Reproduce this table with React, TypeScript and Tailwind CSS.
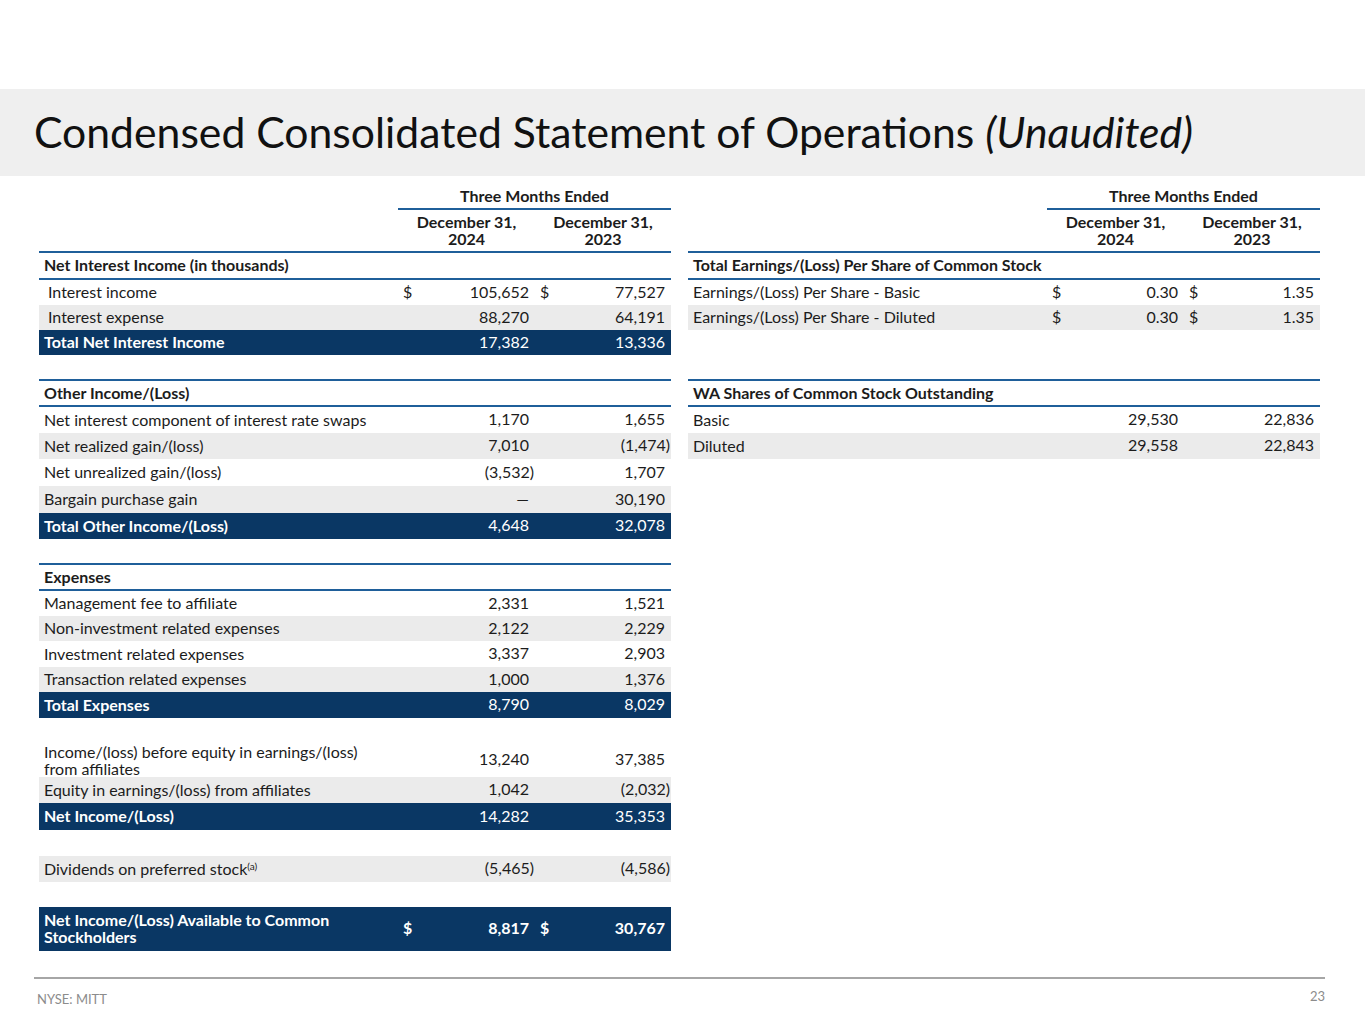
import React from "react";

const NAVY = "bg-[#0a3764]";
type Row = {
  label: React.ReactNode;
  a: string;
  b: string;
  dollar?: boolean;
  kind?: "w" | "g" | "t";
  h?: string;
  bold?: boolean;
};

function Num({ v, bold }: { v: string; bold?: boolean }) {
  const neg = v.endsWith(")");
  return (
    <span className={`${neg ? "pr-[1px]" : "pr-[6px]"} ${bold ? "font-bold" : ""}`}>{v}</span>
  );
}

function DataRow({ r }: { r: Row }) {
  const bg = r.kind === "g" ? "bg-[#ebebeb]" : r.kind === "t" ? NAVY : "bg-white";
  const color = r.kind === "t" ? "text-white" : "text-[#1c1c1c]";
  const isBoldLabel = r.kind === "t";
  return (
    <div className={`flex items-center pb-[2px] ${bg} ${color} ${r.h ?? "h-[25px]"}`}>
      <div className={`w-[359px] pl-[5px] leading-[17px] ${isBoldLabel ? "font-bold" : ""}`}>{r.label}</div>
      <div className="flex w-[137px] items-center justify-between">
        <span className={`pl-[5px] ${r.bold ? "font-bold" : ""}`}>{r.dollar ? "$" : ""}</span>
        <Num v={r.a} bold={r.bold} />
      </div>
      <div className="flex w-[136px] items-center justify-between">
        <span className={`pl-[5px] ${r.bold ? "font-bold" : ""}`}>{r.dollar ? "$" : ""}</span>
        <Num v={r.b} bold={r.bold} />
      </div>
    </div>
  );
}

function Line() {
  return <div className="h-[2px] bg-[#1f5f9a]" />;
}

function SectionHeader({ title }: { title: string }) {
  return (
    <>
      <Line />
      <div className="flex h-[24px] items-center pb-[1px] pl-[5px] font-bold text-[#1c1c1c]">{title}</div>
      <Line />
    </>
  );
}

function TableHead({ title }: { title: string }) {
  return (
    <>
      <div className="flex h-[23px]">
        <div className="w-[359px]" />
        <div className="flex w-[273px] items-center justify-center pb-[2px] font-bold text-[#1c1c1c]">Three Months Ended</div>
      </div>
      <div className="flex">
        <div className="w-[359px]" />
        <div className="h-[2px] w-[273px] bg-[#1f5f9a]" />
      </div>
      <div className="flex h-[41px] items-center pb-[1px]">
        <div className="w-[359px]" />
        <div className="w-[137px] text-center font-bold leading-[17px] text-[#1c1c1c]">
          December 31,<br />2024
        </div>
        <div className="w-[136px] text-center font-bold leading-[17px] text-[#1c1c1c]">
          December 31,<br />2023
        </div>
      </div>
      <Line />
      <div className="flex h-[25px] items-center pb-[2px] pl-[5px] font-bold text-[#1c1c1c]">{title}</div>
      <Line />
    </>
  );
}

export default function App() {
  const font = { fontFamily: "Lato, 'Open Sans', sans-serif" };
  return (
    <div className="relative h-[1024px] w-[1365px] bg-white text-[16px]" style={font}>
      <div className="h-[89px]" />
      <div className="flex h-[87px] items-center bg-[#efefef] pl-[34px]">
        <h1 className="text-[42.7px] leading-none text-[#111]">
          Condensed Consolidated Statement of Operations <i>(Unaudited)</i>
        </h1>
      </div>
      <div className="flex gap-[17px] pl-[39px] pt-[9px]">
        {/* Left table */}
        <div className="w-[632px]">
          <TableHead title="Net Interest Income (in thousands)" />
          <DataRow r={{ label: <span className="pl-[4px]">Interest income</span>, a: "105,652", b: "77,527", dollar: true }} />
          <DataRow r={{ label: <span className="pl-[4px]">Interest expense</span>, a: "88,270", b: "64,191", kind: "g" }} />
          <DataRow r={{ label: "Total Net Interest Income", a: "17,382", b: "13,336", kind: "t" }} />
          <div className="h-[24px]" />
          <SectionHeader title="Other Income/(Loss)" />
          <DataRow r={{ label: "Net interest component of interest rate swaps", a: "1,170", b: "1,655", h: "h-[26px]" }} />
          <DataRow r={{ label: "Net realized gain/(loss)", a: "7,010", b: "(1,474)", kind: "g", h: "h-[26px]" }} />
          <DataRow r={{ label: "Net unrealized gain/(loss)", a: "(3,532)", b: "1,707", h: "h-[27px]" }} />
          <DataRow r={{ label: "Bargain purchase gain", a: "—", b: "30,190", kind: "g", h: "h-[27px]" }} />
          <DataRow r={{ label: "Total Other Income/(Loss)", a: "4,648", b: "32,078", kind: "t", h: "h-[26px]" }} />
          <div className="h-[24px]" />
          <SectionHeader title="Expenses" />
          <DataRow r={{ label: "Management fee to affiliate", a: "2,331", b: "1,521", h: "h-[25px]" }} />
          <DataRow r={{ label: "Non-investment related expenses", a: "2,122", b: "2,229", kind: "g", h: "h-[25px]" }} />
          <DataRow r={{ label: "Investment related expenses", a: "3,337", b: "2,903", h: "h-[26px]" }} />
          <DataRow r={{ label: "Transaction related expenses", a: "1,000", b: "1,376", kind: "g", h: "h-[25px]" }} />
          <DataRow r={{ label: "Total Expenses", a: "8,790", b: "8,029", kind: "t", h: "h-[26px]" }} />
          <div className="h-[24px]" />
          <DataRow
            r={{
              label: (
                <span className="block pt-[3px]">
                  Income/(loss) before equity in earnings/(loss)
                  <br />
                  from affiliates
                </span>
              ),
              a: "13,240",
              b: "37,385",
              h: "h-[35px]",
            }}
          />
          <DataRow r={{ label: "Equity in earnings/(loss) from affiliates", a: "1,042", b: "(2,032)", kind: "g", h: "h-[26px]" }} />
          <DataRow r={{ label: "Net Income/(Loss)", a: "14,282", b: "35,353", kind: "t", h: "h-[27px]" }} />
          <div className="h-[26px]" />
          <DataRow
            r={{
              label: (
                <span>
                  Dividends on preferred stock<sup className="text-[10px]">(a)</sup>
                </span>
              ),
              a: "(5,465)",
              b: "(4,586)",
              kind: "g",
              h: "h-[26px]",
            }}
          />
          <div className="h-[25px]" />
          <DataRow
            r={{
              label: (
                <span>
                  Net Income/(Loss) Available to Common
                  <br />
                  Stockholders
                </span>
              ),
              a: "8,817",
              b: "30,767",
              dollar: true,
              bold: true,
              kind: "t",
              h: "h-[44px]",
            }}
          />
        </div>
        {/* Right table */}
        <div className="w-[632px]">
          <TableHead title="Total Earnings/(Loss) Per Share of Common Stock" />
          <DataRow r={{ label: "Earnings/(Loss) Per Share - Basic", a: "0.30", b: "1.35", dollar: true }} />
          <DataRow r={{ label: "Earnings/(Loss) Per Share - Diluted", a: "0.30", b: "1.35", dollar: true, kind: "g" }} />
          <div className="h-[49px]" />
          <SectionHeader title="WA Shares of Common Stock Outstanding" />
          <DataRow r={{ label: "Basic", a: "29,530", b: "22,836", h: "h-[26px]" }} />
          <DataRow r={{ label: "Diluted", a: "29,558", b: "22,843", kind: "g", h: "h-[26px]" }} />
        </div>
      </div>
      {/* Footer */}
      <div className="absolute left-[34px] top-[977px] w-[1291px]">
        <div className="h-[2px] bg-[#a6a6a6]" />
        <div className="flex items-start justify-between text-[13px] text-[#8c8c8c]">
          <span className="pl-[3px] pt-[11px]">NYSE: MITT</span>
          <span className="pt-[8px]">23</span>
        </div>
      </div>
    </div>
  );
}
